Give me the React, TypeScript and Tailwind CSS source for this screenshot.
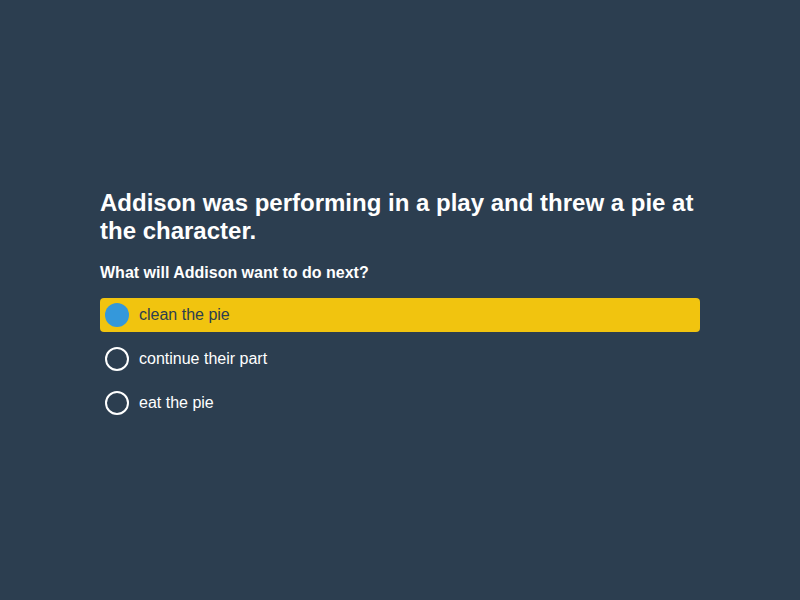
import { useState } from 'react';

const options = ['clean the pie', 'continue their part', 'eat the pie'];

export default function App() {
  const [selected, setSelected] = useState(0);

  return (
    <div
      className="flex items-center justify-center w-full min-h-screen bg-[#2c3e50]"
      style={{ fontFamily: '"Liberation Sans", Arial, sans-serif' }}
    >
      <div className="w-[600px] pt-[9px]">
        <h1 className="text-[24px] font-bold leading-[28px] text-white">
          Addison was performing in a play and threw a pie at the character.
        </h1>
        <p className="mt-[18px] text-[16px] font-bold leading-[20px] text-white">
          What will Addison want to do next?
        </p>
        <div className="flex flex-col gap-[10px] mt-[15px]">
          {options.map((option, i) => {
            const active = i === selected;
            return (
              <button
                key={option}
                onClick={() => setSelected(i)}
                className={`flex items-center gap-[10px] h-[34px] px-[5px] rounded-[4px] text-left ${
                  active ? 'bg-[#f1c40f] text-[#2c3e50]' : 'text-white'
                }`}
              >
                <span
                  className={`size-[24px] rounded-full ${
                    active ? 'bg-[#3498db]' : 'border-2 border-white'
                  }`}
                />
                <span className="text-[16px] leading-[20px]">{option}</span>
              </button>
            );
          })}
        </div>
      </div>
    </div>
  );
}
